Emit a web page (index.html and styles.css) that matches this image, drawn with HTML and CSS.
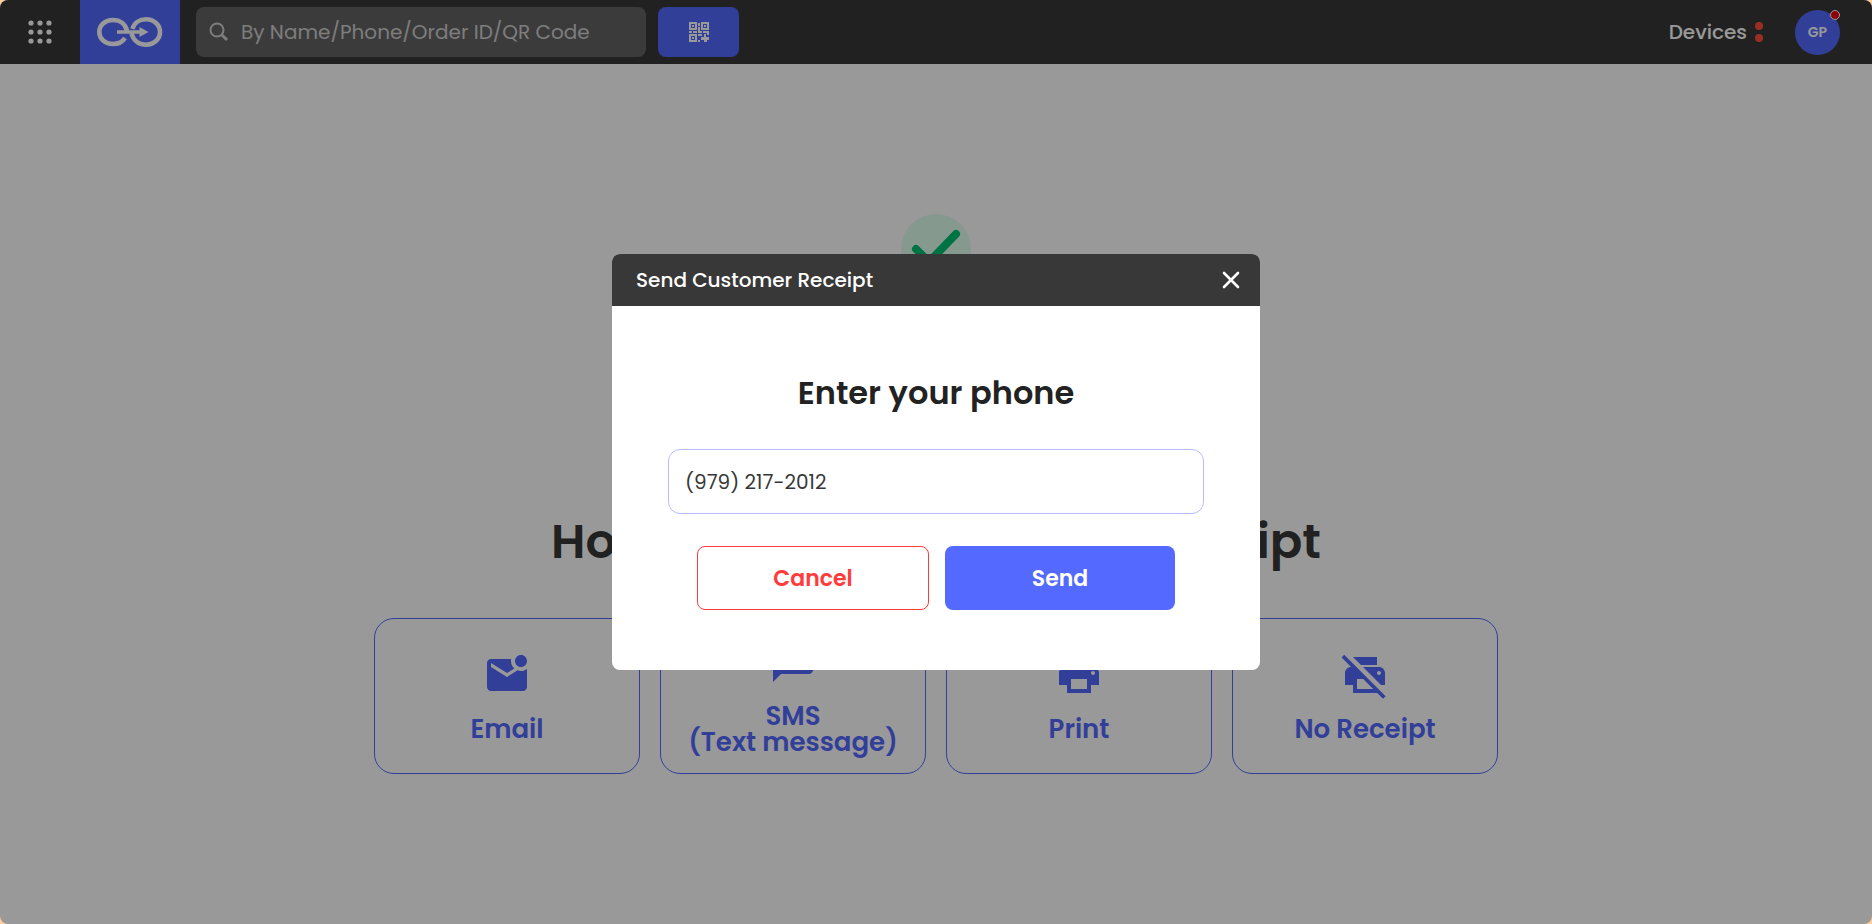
FILE: index.html
```html
<!DOCTYPE html>
<html lang="en">
<head>
  <meta charset="UTF-8" />
  <meta name="viewport" content="width=device-width, initial-scale=1.0" />
  <title>Send Customer Receipt</title>
  <link rel="stylesheet" href="styles.css">
</head>
<body>
  <div class="app">
    <header class="topbar">
      <button class="apps-btn" type="button" aria-label="Menu">
        <svg width="24" height="24" viewBox="0 0 24 24" fill="#fff">
          <circle cx="3" cy="3" r="2.6"/><circle cx="12" cy="3" r="2.6"/><circle cx="21" cy="3" r="2.6"/>
          <circle cx="3" cy="12" r="2.6"/><circle cx="12" cy="12" r="2.6"/><circle cx="21" cy="12" r="2.6"/>
          <circle cx="3" cy="21" r="2.6"/><circle cx="12" cy="21" r="2.6"/><circle cx="21" cy="21" r="2.6"/>
        </svg>
      </button>
      <a class="logo" href="#" aria-label="Home">
        <svg width="68" height="32" viewBox="0 0 68 32" fill="none" stroke="#fff" stroke-width="4.6">
          <path d="M31 15C29.500 8 24 4 17 4C9 4 3.300 9.300 3.300 16S9 28 17 28C22 28 26.500 26 29 22"/>
          <path d="M36.500 13C38 7 43.500 3.300 50 3.300C58 3.300 64 8.800 64 16S58 28.700 50 28.700C42.500 28.700 37 24 35.500 17"/>
          <path d="M21 16H46" stroke-width="3.6"/>
          <path d="M43.500 11L52.500 16L43.500 21Z" fill="#fff" stroke="none"/>
        </svg>
      </a>
      <form class="search">
        <label class="search-box">
          <svg width="20" height="20" viewBox="0 0 20 20" fill="none" stroke="#d0d0d0">
            <circle cx="8" cy="8" r="6.500" stroke-width="2"/>
            <path d="M13 13L18 18" stroke-width="3"/>
          </svg>
          <input type="text" placeholder="By Name/Phone/Order ID/QR Code" aria-label="Search">
        </label>
        <button class="qr-btn" type="button" aria-label="Scan QR code">
          <svg width="20" height="20" viewBox="0 0 20 20" fill="#fff">
            <path fill-rule="evenodd" d="M0 0h8v8H0zM2 2v4h4V2zM12 0h8v8h-8zM14 2v4h4V2zM0 12h8v8H0zM2 14v4h4v-4z"/>
            <path d="M3 3h2v2H3zM15 3h2v2h-2zM3 15h2v2H3zM9 1h2v3H9zM9 5h2v4H9zM0 9h3v2H0zM4 9h4v2H4zM9 9h4v2H9zM14 9h6v2h-6zM9 12h4v2H9zM15 12h2v3h3v3h-2v2h-3v-2h-3v-3h3zM9 18h2v2H9zM18 11h2v2h-2z"/>
          </svg>
        </button>
      </form>
      <div class="account">
        <a class="devices" href="#">Devices
          <span class="devices-dots"><i></i><i></i></span>
        </a>
        <button class="avatar" type="button">GP<span class="badge"></span></button>
      </div>
    </header>

    <main class="receipt">
      <svg width="70" height="70" viewBox="0 0 70 70" fill="none">
        <circle cx="35" cy="35" r="35" fill="#e0ffef"/>
        <path d="M15 35L28 48L55 20" stroke="#00c074" stroke-width="8" stroke-linecap="round" stroke-linejoin="round"/>
      </svg>
      <h1>How would you like your receipt</h1>
      <div class="options">
        <button class="option" type="button">
          <svg width="48" height="48" viewBox="0 0 24 24" fill="currentColor">
            <path d="M22 8.980V18c0 1.100-.9 2-2 2H4c-1.100 0-2-.9-2-2V6c0-1.100.9-2 2-2h10.100c-.06.320-.1.660-.1 1 0 1.480.650 2.790 1.670 3.710L12 11 4 6v2l8 5 5.300-3.320c.540.200 1.100.320 1.700.320 1.130 0 2.160-.390 3-1.020zM16 5c0 1.660 1.340 3 3 3s3-1.340 3-3-1.340-3-3-3-3 1.340-3 3z"/>
          </svg>
          <span>Email</span>
        </button>
        <button class="option" type="button">
          <svg width="48" height="48" viewBox="0 0 24 24" fill="currentColor">
            <path d="M20 2H4c-1.100 0-2 .9-2 2v18l4-4h14c1.100 0 2-.9 2-2V4c0-1.100-.9-2-2-2z"/>
          </svg>
          <span>SMS<br>(Text message)</span>
        </button>
        <button class="option" type="button">
          <svg width="48" height="48" viewBox="0 0 24 24" fill="currentColor">
            <path d="M19 8H5c-1.660 0-3 1.340-3 3v6h4v4h12v-4h4v-6c0-1.660-1.340-3-3-3zm-3 11H8v-5h8v5zm3-7c-.55 0-1-.45-1-1s.45-1 1-1 1 .45 1 1-.45 1-1 1zm-1-9H6v4h12V3z"/>
          </svg>
          <span>Print</span>
        </button>
        <button class="option" type="button">
          <svg width="48" height="48" viewBox="0 0 24 24" fill="currentColor">
            <path d="M19 8H5c-1.660 0-3 1.340-3 3v6h4v4h12v-4h4v-6c0-1.660-1.340-3-3-3zm-3 11H8v-5h8v5zm3-7c-.55 0-1-.45-1-1s.45-1 1-1 1 .45 1 1-.45 1-1 1zm-1-9H6v4h12V3z"/>
            <path d="M1 2L3.500 .5L24 21V24H22.500Z" fill="#fff"/>
            <path d="M.3 3.200L1.600 1.900L22.300 22.600L21 23.900Z"/>
          </svg>
          <span>No Receipt</span>
        </button>
      </div>
    </main>

    <div class="overlay">
      <section class="modal" role="dialog" aria-labelledby="modal-title">
        <div class="modal-header">
          <h2 id="modal-title">Send Customer Receipt</h2>
          <button class="close" type="button" aria-label="Close">
            <svg width="18" height="18" viewBox="0 0 18 18" stroke="#fff" stroke-width="2.600" stroke-linecap="round">
              <path d="M2 2L16 16M16 2L2 16"/>
            </svg>
          </button>
        </div>
        <form class="modal-body">
          <label for="phone">Enter your phone</label>
          <input id="phone" type="tel" value="(979) 217-2012">
          <div class="actions">
            <button class="btn btn-cancel" type="button">Cancel</button>
            <button class="btn btn-send" type="button">Send</button>
          </div>
        </form>
      </section>
    </div>
  </div>
</body>
</html>
```
FILE: styles.css
```css
:root {
  --primary: #5469ff;
  --dark: #383838;
  --danger: #ff3b3b;
  --text: #222222;
}
* {
  box-sizing: border-box;
}
body {
  margin: 0;
  background-color: #ffcc99;
  color: var(--text);
  font-family: Poppins, Inter, "Open Sans", sans-serif;
}
button,
input {
  font-family: inherit;
}
button {
  padding: 0;
  border: none;
  cursor: pointer;
}
svg {
  display: block;
  flex-shrink: 0;
}
.app {
  position: relative;
  display: flex;
  flex-direction: column;
  min-height: 100vh;
  border-radius: 8px;
  overflow: hidden;
  background-color: #ffffff;
}
.topbar {
  display: flex;
  align-items: center;
  height: 64px;
  padding-right: 32px;
  background-color: var(--dark);
}
.apps-btn,
.logo {
  display: flex;
  align-items: center;
  justify-content: center;
  height: 100%;
}
.apps-btn {
  width: 80px;
  background: none;
}
.logo {
  width: 100px;
  background-color: var(--primary);
}
.search {
  display: flex;
  gap: 12px;
  margin-left: 16px;
}
.search-box {
  display: flex;
  align-items: center;
  gap: 10px;
  width: 450px;
  height: 50px;
  padding: 0 13px;
  border-radius: 8px;
  background-color: #636363;
}
.search-box input {
  flex: 1;
  min-width: 0;
  border: none;
  outline: none;
  background: none;
  color: #ffffff;
  font-size: 20px;
}
.search-box input::placeholder {
  color: #d0d0d0;
  opacity: 1;
}
.qr-btn {
  display: flex;
  align-items: center;
  justify-content: center;
  width: 81px;
  height: 50px;
  border-radius: 8px;
  background-color: var(--primary);
}
.account {
  display: flex;
  align-items: center;
  gap: 32px;
  margin-left: auto;
}
.devices {
  display: flex;
  align-items: center;
  gap: 8px;
  color: #ffffff;
  font-size: 20px;
  font-weight: 500;
  text-decoration: none;
}
.devices-dots {
  display: flex;
  flex-direction: column;
  gap: 4px;
}
.devices-dots i {
  width: 8px;
  height: 8px;
  border-radius: 50%;
  background-color: #ff4d3d;
}
.avatar {
  position: relative;
  width: 45px;
  height: 45px;
  border-radius: 50%;
  background-color: var(--primary);
  color: #ffffff;
  font-size: 14px;
  font-weight: 600;
}
.badge {
  position: absolute;
  top: 0;
  right: 0;
  width: 10px;
  height: 10px;
  border: 1px solid #ffffff;
  border-radius: 50%;
  background-color: #f00010;
}
.receipt {
  flex: 1;
  display: flex;
  flex-direction: column;
  align-items: center;
  padding: 150px 24px;
}
.receipt h1 {
  margin: 222px 0 40px;
  color: var(--dark);
  font-size: 48px;
  line-height: 72px;
  font-weight: 600;
}
.options {
  display: grid;
  grid-template-columns: repeat(4, 1fr);
  gap: 20px;
  width: 100%;
  max-width: 1124px;
}
.option {
  display: flex;
  flex-direction: column;
  align-items: center;
  justify-content: center;
  gap: 17px;
  height: 156px;
  border: 1px solid var(--primary);
  border-radius: 20px;
  background: none;
  color: var(--primary);
  font-size: 26px;
  line-height: 26px;
  font-weight: 600;
}
.overlay {
  position: absolute;
  inset: 0;
  display: flex;
  align-items: center;
  justify-content: center;
  background-color: rgba(0, 0, 0, 0.4);
}
.modal {
  width: 648px;
  border-radius: 8px;
  overflow: hidden;
  background-color: #ffffff;
}
.modal-header {
  display: flex;
  align-items: center;
  justify-content: space-between;
  height: 52px;
  padding: 0 20px 0 24px;
  background-color: var(--dark);
  color: #ffffff;
}
.modal-header h2 {
  margin: 0;
  font-size: 20px;
  font-weight: 500;
}
.close {
  background: none;
}
.modal-body {
  display: flex;
  flex-direction: column;
  align-items: center;
  padding: 63px 56px 60px;
}
.modal-body label {
  margin-bottom: 32px;
  font-size: 32px;
  line-height: 48px;
  font-weight: 600;
}
.modal-body input {
  width: 100%;
  height: 65px;
  padding: 0 16px;
  border: 1px solid #b5bfff;
  border-radius: 12px;
  outline: none;
  color: var(--dark);
  font-size: 20px;
}
.actions {
  display: flex;
  gap: 16px;
  width: 100%;
  margin-top: 32px;
  padding: 0 29px;
}
.btn {
  flex: 1;
  height: 64px;
  border-radius: 8px;
  font-size: 22px;
  font-weight: 600;
}
.btn-cancel {
  border: 1px solid var(--danger);
  background-color: #ffffff;
  color: var(--danger);
}
.btn-send {
  background-color: var(--primary);
  color: #ffffff;
}
```
